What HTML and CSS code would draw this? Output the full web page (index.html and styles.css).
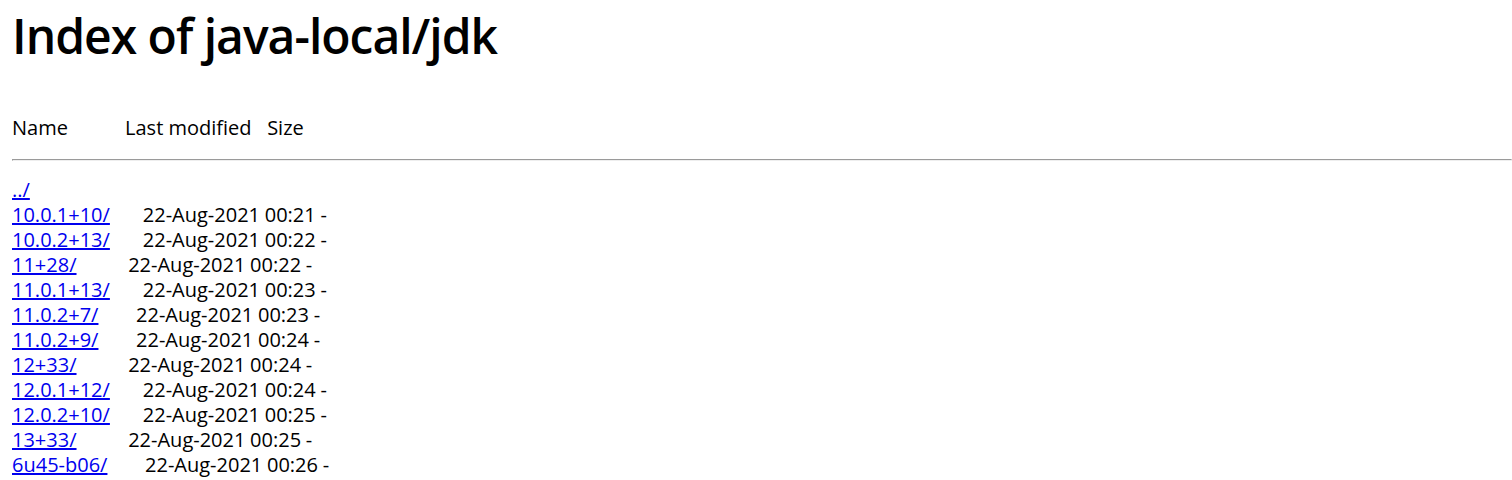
FILE: index.html
```
<!doctype html>
<html>
	<head>
		<meta charset="utf-8" />
		<meta name="viewport" content="width=device-width, initial-scale=1" />
		<title>Index of java-local/jdk</title>

		<link rel="stylesheet" href="styles.css">
	</head>
	<body>
		<h1 class="title">Index of java-local/jdk</h1>
		<pre class="listing listing-head">Name           Last modified   Size</pre>
		<hr class="divider" />
		<pre class="listing"><a href="../">../</a>
<a href="10.0.1+10/">10.0.1+10/</a>       22-Aug-2021 00:21 -
<a href="10.0.2+13/">10.0.2+13/</a>       22-Aug-2021 00:22 -
<a href="11+28/">11+28/</a>           22-Aug-2021 00:22 -
<a href="11.0.1+13/">11.0.1+13/</a>       22-Aug-2021 00:23 -
<a href="11.0.2+7/">11.0.2+7/</a>        22-Aug-2021 00:23 -
<a href="11.0.2+9/">11.0.2+9/</a>        22-Aug-2021 00:24 -
<a href="12+33/">12+33/</a>           22-Aug-2021 00:24 -
<a href="12.0.1+12/">12.0.1+12/</a>       22-Aug-2021 00:24 -
<a href="12.0.2+10/">12.0.2+10/</a>       22-Aug-2021 00:25 -
<a href="13+33/">13+33/</a>           22-Aug-2021 00:25 -
<a href="6u45-b06/">6u45-b06/</a>        22-Aug-2021 00:26 -</pre>
	</body>
</html>
```
FILE: styles.css
```
html {
	--font-main: "Open Sans", "Noto Sans", sans-serif;
	--color-fg: #000;
	--color-link: #0000ee;
}

body {
	font-family: var(--font-main);
	color: var(--color-fg);
	background: #fff;
	margin: 0;
	padding: 0 0 0 12px;
}

.title {
	font-size: 48px;
	font-weight: 600;
	letter-spacing: -1px;
	line-height: 57px;
	margin: 7px 0 51px;
}

.listing {
	font-family: var(--font-main);
	font-size: 20px;
	line-height: 25px;
	word-spacing: -0.5px;
	margin: 0;
}

.listing-head {
	word-spacing: 0;
}

.listing a {
	color: var(--color-link);
}

.divider {
	margin: 19px 0 16px;
}
```
